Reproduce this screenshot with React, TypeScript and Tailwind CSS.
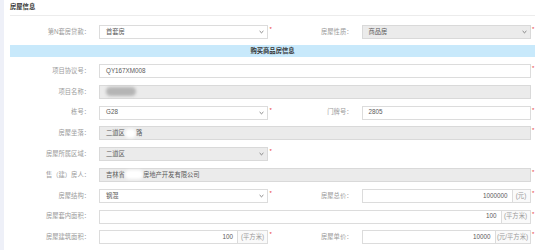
import { ReactNode } from 'react'

type FieldProps = {
  value?: ReactNode;
  gray?: boolean;
  select?: boolean;
  right?: boolean;
  addon?: string;
  addonW?: string;
}

function Label({ text }: { text: string }) {
  return <div className="w-[89px] shrink-0 pr-[9px] text-right text-[#9a9a9a] whitespace-nowrap">{text}</div>
}

function Star({ show = true }: { show?: boolean }) {
  return (
    <div className="w-[4.5px] shrink-0 self-start pl-[1.5px] text-[6px] leading-[8px] text-[#e8383d]">
      {show ? '*' : ''}
    </div>
  )
}

function Field({ value, gray, select, right, addon, addonW }: FieldProps) {
  return (
    <div
      className={`flex h-[14px] min-w-0 flex-1 items-stretch border ${
        gray ? 'border-[#d9d9d9] bg-[#ebebeb]' : 'border-[#dcdcdc] bg-white'
      }`}
    >
      <div
        className={`flex min-w-0 flex-1 items-center whitespace-nowrap text-[#5a5a5a] ${
          right ? 'justify-end pr-[4px]' : 'pl-[6px]'
        }`}
      >
        {value}
      </div>
      {select && (
        <div className="flex items-center pr-[3px]">
          <svg width="5" height="4" viewBox="0 0 5 4">
            <polyline points="0.6,1 2.5,2.8 4.4,1" fill="none" stroke="#666" strokeWidth="0.8" />
          </svg>
        </div>
      )}
      {addon && (
        <div
          className={`flex shrink-0 items-center justify-center border-l border-[#dcdcdc] bg-[#fafafa] text-[#999] whitespace-nowrap ${addonW}`}
        >
          {addon}
        </div>
      )}
    </div>
  )
}

function Blob({ w, dark }: { w: string; dark?: boolean }) {
  return (
    <span
      className={`inline-block h-[9px] rounded-full blur-[1.5px] ${w} ${dark ? 'bg-[#b5b5b5]' : 'bg-white'}`}
    />
  )
}

function Cell({ label, star = true, ...rest }: FieldProps & { label: string; star?: boolean }) {
  return (
    <div className="flex items-center">
      <Label text={label} />
      <Field {...rest} />
      <Star show={star} />
    </div>
  )
}

export default function App() {
  return (
    <div className="min-h-[250px] w-[545px] border-l-[4px] border-[#eef0f8] bg-white pl-[6px] pr-[10px] font-['Liberation_Sans','Noto_Sans_CJK_SC',sans-serif] text-[6.3px] leading-none">
      <div className="h-[16px] border-b border-[#ececec] pt-[4px] font-bold text-[#333]">房屋信息</div>

      <div className="mt-[9px] grid h-[14px] grid-cols-2">
        <Cell label="第N套房贷款：" value="首套房" select />
        <Cell label="房屋性质：" value="商品房" select gray />
      </div>

      <div className="mt-[6px] flex h-[12px] items-center justify-center bg-[#c8e9fb] font-bold text-[#333]">
        购买商品房信息
      </div>

      <div className="mt-[7px] flex flex-col gap-[6.8px]">
        <div className="h-[14px]">
          <Cell label="项目协议号：" value="QY167XM008" />
        </div>
        <div className="h-[14px]">
          <Cell label="项目名称：" gray star={false} value={<Blob w="w-[30px]" dark />} />
        </div>
        <div className="grid h-[14px] grid-cols-2">
          <Cell label="栋号：" value="G28" select />
          <Cell label="门牌号：" value="2805" />
        </div>
        <div className="h-[14px]">
          <Cell
            label="房屋坐落："
            gray
            value={
              <>
                二道区
                <Blob w="w-[11px]" />
                路
              </>
            }
          />
        </div>
        <div className="grid h-[14px] grid-cols-2">
          <Cell label="房屋所属区域：" value="二道区" select gray />
          <div />
        </div>
        <div className="h-[14px]">
          <Cell
            label="售（建）房人："
            gray
            value={
              <>
                吉林省
                <Blob w="w-[18px]" />
                房地产开发有限公司
              </>
            }
          />
        </div>
        <div className="grid h-[14px] grid-cols-2">
          <Cell label="房屋结构：" value="钢混" select />
          <Cell label="房屋总价：" value="1000000" right addon="(元)" addonW="w-[18px]" />
        </div>
        <div className="h-[14px]">
          <Cell label="房屋套内面积：" value="100" right addon="(平方米)" addonW="w-[29px]" />
        </div>
        <div className="grid h-[14px] grid-cols-2">
          <Cell label="房屋建筑面积：" value="100" right addon="(平方米)" addonW="w-[30px]" />
          <Cell label="房屋单价：" value="10000" right addon="(元/平方米)" addonW="w-[35px]" />
        </div>
      </div>
    </div>
  )
}
